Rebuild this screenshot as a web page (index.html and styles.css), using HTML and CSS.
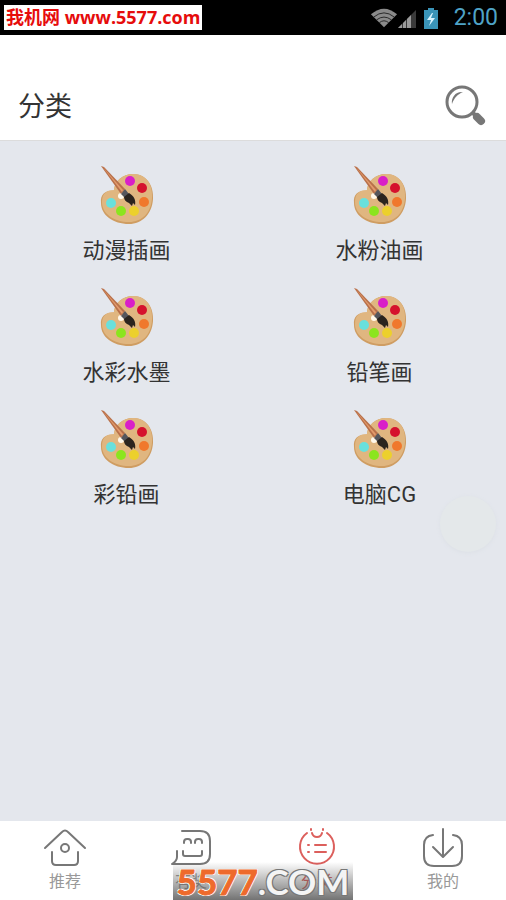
FILE: index.html
```html
<!DOCTYPE html>
<html lang="zh-CN">

<head>
    <meta charset="UTF-8">
    <meta name="viewport" content="width=device-width, initial-scale=1.0">
    <title>分类</title>
    <link rel="stylesheet" href="styles.css">
</head>

<body>
    <!-- Shared palette icon -->
    <svg class="sprite" aria-hidden="true">
        <symbol id="palette" viewBox="0 0 64 68">
            <path d="M19 31C19 21 28 14 38 14C51 14 59 25 58 39C57 54 47 64 34 64C18 64 6 55 6 43C5 34 11 30 19 31Z" fill="#cf9d62" />
            <path d="M19 30C19 21 28 14 38 14C51 14 58 24 57 38C56 53 47 62 34 62C19 62 7 54 7 42C7 33 12 30 19 30Z" fill="#e0b680" />
            <circle cx="35" cy="21" r="5" fill="#d91fc8" />
            <circle cx="47" cy="28" r="5" fill="#d5122d" />
            <circle cx="49" cy="42" r="5" fill="#f0782c" />
            <circle cx="39" cy="51" r="5" fill="#ecd02c" />
            <circle cx="26" cy="51" r="5" fill="#8be51e" />
            <circle cx="16" cy="43" r="5" fill="#69e0dc" />
            <circle cx="26" cy="36" r="3" fill="#fff8ea" />
            <path d="M6 6L9 7L30 29L26 34Z" fill="#b8704a" />
            <path d="M7 6L28 30L27 32Z" fill="#e29b6c" />
            <path d="M30 29L34 34L30 38L26 34Z" fill="#55565c" />
            <path d="M34 33C39 36 41 40 40 45L38 43L37 46L34 43C31 42 29 40 29 37Z" fill="#2b241e" />
        </symbol>
    </svg>

    <div class="status-bar">
        <div class="site-mark">我机网 www.5577.com</div>
        <div class="status-icons">
            <svg class="wifi" viewBox="0 0 30 22" aria-hidden="true">
                <path d="M1 7Q15 -5 29 7L15 21Z" fill="#8a8a8a" />
                <path d="M4 10Q15 1 26 10M7 13Q15 7 23 13M10 16Q15 12 20 16" fill="none" stroke="#222" />
            </svg>
            <svg class="signal" viewBox="0 0 18 22" aria-hidden="true">
                <path d="M0 21L18 3V21Z" fill="#3a3a3a" />
                <path d="M0 21L4 17V21ZM5 16L8 13V21H5ZM9 12L13 8V21H9Z" fill="#9a9a9a" />
            </svg>
            <svg class="battery" viewBox="0 0 14 22" aria-hidden="true">
                <path d="M4 1H10V3H14V22H0V3H4Z" fill="#3a94b8" />
                <path d="M8 6L3 13H7L5 19L11 11H7L9 6Z" fill="#d9f4ff" />
            </svg>
            <span class="clock">2:00</span>
        </div>
    </div>

    <header class="header">
        <h1>分类</h1>
        <button class="search-btn" type="button" aria-label="搜索">
            <svg viewBox="0 0 44 44" aria-hidden="true">
                <circle cx="18" cy="18" r="15" fill="none" stroke="#777" stroke-width="3" />
                <path d="M8 20C7 13 12 7 19 8C14 10 10 14 8 20Z" fill="#777" />
                <path d="M28 28L32 32" stroke="#777" stroke-width="4" />
                <path d="M33 33L37 37" stroke="#777" stroke-width="8" stroke-linecap="round" />
            </svg>
        </button>
    </header>

    <main class="content">
        <div class="categories">
            <a class="category" href="#"><svg aria-hidden="true"><use href="#palette" /></svg><span>动漫插画</span></a>
            <a class="category" href="#"><svg aria-hidden="true"><use href="#palette" /></svg><span>水粉油画</span></a>
            <a class="category" href="#"><svg aria-hidden="true"><use href="#palette" /></svg><span>水彩水墨</span></a>
            <a class="category" href="#"><svg aria-hidden="true"><use href="#palette" /></svg><span>铅笔画</span></a>
            <a class="category" href="#"><svg aria-hidden="true"><use href="#palette" /></svg><span>彩铅画</span></a>
            <a class="category" href="#"><svg aria-hidden="true"><use href="#palette" /></svg><span>电脑CG</span></a>
        </div>
        <button class="float-btn" type="button" aria-label="快捷按钮"></button>
    </main>

    <nav class="tab-bar">
        <a class="tab" href="#">
            <svg viewBox="0 0 44 44" aria-hidden="true">
                <path d="M2 21L19 5Q22 2 25 5L42 21M9 25V34Q9 38 13 38H31Q35 38 35 34V25" />
                <circle cx="22" cy="21" r="4" />
            </svg>
            <span>推荐</span>
        </a>
        <a class="tab" href="#">
            <svg viewBox="0 0 44 44" aria-hidden="true">
                <path d="M13 4H31Q41 4 41 14V27Q41 37 31 37H3Q8 34 8 30V24" />
                <path d="M15 16V15Q15 12 18 12H19Q22 12 22 15V16M26 16V15Q26 12 29 12H30Q33 12 33 15V16M14 24V27Q14 29 16 29H31Q33 29 33 27V24" />
            </svg>
            <span>有奖</span>
        </a>
        <a class="tab active" href="#">
            <svg viewBox="0 0 44 44" aria-hidden="true">
                <path d="M12 6A17 17 0 1 0 32 6M17 6Q18 10 22 10Q26 10 27 6M16 2V3M28 2V3M20 18H31M20 25H31M13 18H14M13 25H14" />
            </svg>
            <span>分类</span>
        </a>
        <a class="tab" href="#">
            <svg viewBox="0 0 44 44" aria-hidden="true">
                <path d="M12 8Q3 9 3 18V29Q3 39 13 39H31Q41 39 41 29V18Q41 9 32 8M22 2V29M12 20L22 30L32 20" />
            </svg>
            <span>我的</span>
        </a>
        <div class="watermark"><span class="digits">5577</span><span class="domain">.COM</span></div>
    </nav>
</body>

</html>
```
FILE: styles.css
```css
:root {
    --page-bg: #e4e7ed;
    --text-color: #333333;
    --muted-color: #999999;
    --icon-color: #777777;
    --active-color: #dc5f5c;
}

* {
    box-sizing: border-box;
}

body {
    display: flex;
    flex-direction: column;
    min-height: 100vh;
    margin: 0;
    background: var(--page-bg);
    color: var(--text-color);
    font-family: Roboto, "Noto Sans CJK SC", sans-serif;
}

a {
    color: inherit;
    text-decoration: none;
}

button {
    padding: 0;
    border: 0;
    background: none;
    cursor: pointer;
}

.sprite {
    position: absolute;
    width: 0;
    height: 0;
}

/* Status bar */
.status-bar {
    display: flex;
    align-items: center;
    justify-content: space-between;
    height: 35px;
    padding: 0 8px 0 4px;
    background: #000000;
}

.site-mark {
    padding: 0 2px;
    background: #ffffff;
    color: #e60c0c;
    font-family: "Open Sans", "Noto Sans CJK SC", sans-serif;
    font-size: 18px;
    font-weight: bold;
    line-height: 25px;
    white-space: nowrap;
}

.status-icons {
    display: flex;
    align-items: center;
}

.status-icons svg {
    height: 22px;
}

.wifi {
    width: 28px;
}

.signal {
    width: 18px;
}

.battery {
    width: 14px;
    margin: 0 16px 0 8px;
}

.clock {
    color: #4fa3c7;
    font-size: 23px;
    line-height: 35px;
}

/* Title and search */
.header {
    display: flex;
    align-items: flex-end;
    justify-content: space-between;
    height: 106px;
    padding: 0 18px 12px;
    border-bottom: 1px solid #dcdcdc;
    background: #ffffff;
}

.header h1 {
    margin: 0;
    font-size: 27px;
    font-weight: normal;
    line-height: 42px;
}

.search-btn {
    width: 44px;
    height: 44px;
}

.search-btn svg {
    display: block;
}

/* Category grid */
.content {
    position: relative;
    flex: 1;
    padding: 19px 0;
}

.categories {
    display: grid;
    grid-template-columns: 1fr 1fr;
    row-gap: 16px;
}

.category {
    display: flex;
    flex-direction: column;
    align-items: center;
    gap: 8px;
    font-size: 22px;
    line-height: 30px;
}

.category svg {
    width: 64px;
    height: 68px;
}

.float-btn {
    position: absolute;
    top: 355px;
    right: 10px;
    width: 56px;
    height: 56px;
    border-radius: 50%;
    background: #e4e8ea;
    box-shadow: 0 1px 4px #dce0e6;
}

/* Bottom tabs */
.tab-bar {
    position: relative;
    display: grid;
    grid-template-columns: repeat(4, 1fr);
    height: 79px;
    padding: 6px 0 0 2px;
    background: #ffffff;
}

.tab {
    display: flex;
    flex-direction: column;
    align-items: center;
    gap: 1px;
    color: var(--muted-color);
    font-size: 16px;
    line-height: 20px;
}

.tab svg {
    width: 44px;
    height: 44px;
    fill: none;
    stroke: var(--icon-color);
    stroke-width: 2;
    stroke-linecap: round;
    stroke-linejoin: round;
}

.tab.active {
    color: var(--active-color);
}

.tab.active svg {
    stroke: var(--active-color);
}

/* Site watermark over the tabs */
.watermark {
    position: absolute;
    bottom: 0;
    left: 173px;
    width: 180px;
    height: 38px;
    background: linear-gradient(rgba(80, 80, 80, 0), rgba(80, 80, 80, 0.8));
    font-family: Lato, sans-serif;
    font-size: 35px;
    font-weight: bold;
    line-height: 38px;
    text-align: center;
    white-space: nowrap;
}

.digits {
    color: #ee6a2c;
    -webkit-text-stroke: 1px #ee6a2c;
    text-shadow: 1px 1px 0 #ffffff, -1px -1px 0 #ffffff, 1px -1px 0 #ffffff, -1px 1px 0 #ffffff;
}

.domain {
    color: #f4f4f4;
    text-shadow: 1px 1px 0 #777777, -1px -1px 0 #777777, 1px -1px 0 #777777, -1px 1px 0 #777777;
}
```
